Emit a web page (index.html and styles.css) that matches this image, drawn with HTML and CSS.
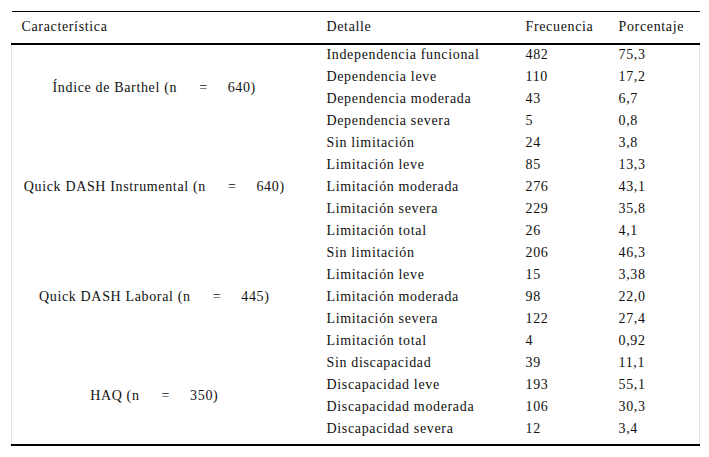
FILE: index.html
```html
<!DOCTYPE html>
<html lang="es">
<head>
<meta charset="utf-8">
<title>Tabla</title>
<link rel="stylesheet" href="styles.css">
</head>
<body>
<table class="data">
  <colgroup>
    <col class="c1"><col class="c2"><col class="c3"><col class="c4">
  </colgroup>
  <thead>
    <tr><th>Característica</th><th>Detalle</th><th>Frecuencia</th><th>Porcentaje</th></tr>
  </thead>
  <tbody>
    <tr><td class="group" rowspan="4">Índice de Barthel (n<span class="eq">=</span>640)</td><td>Independencia funcional</td><td>482</td><td>75,3</td></tr>
    <tr><td>Dependencia leve</td><td>110</td><td>17,2</td></tr>
    <tr><td>Dependencia moderada</td><td>43</td><td>6,7</td></tr>
    <tr><td>Dependencia severa</td><td>5</td><td>0,8</td></tr>
    <tr><td class="group" rowspan="5">Quick DASH Instrumental (n<span class="eq">=</span>640)</td><td>Sin limitación</td><td>24</td><td>3,8</td></tr>
    <tr><td>Limitación leve</td><td>85</td><td>13,3</td></tr>
    <tr><td>Limitación moderada</td><td>276</td><td>43,1</td></tr>
    <tr><td>Limitación severa</td><td>229</td><td>35,8</td></tr>
    <tr><td>Limitación total</td><td>26</td><td>4,1</td></tr>
    <tr><td class="group" rowspan="5">Quick DASH Laboral (n<span class="eq">=</span>445)</td><td>Sin limitación</td><td>206</td><td>46,3</td></tr>
    <tr><td>Limitación leve</td><td>15</td><td>3,38</td></tr>
    <tr><td>Limitación moderada</td><td>98</td><td>22,0</td></tr>
    <tr><td>Limitación severa</td><td>122</td><td>27,4</td></tr>
    <tr><td>Limitación total</td><td>4</td><td>0,92</td></tr>
    <tr><td class="group" rowspan="4">HAQ (n<span class="eq">=</span>350)</td><td>Sin discapacidad</td><td>39</td><td>11,1</td></tr>
    <tr><td>Discapacidad leve</td><td>193</td><td>55,1</td></tr>
    <tr><td>Discapacidad moderada</td><td>106</td><td>30,3</td></tr>
    <tr><td>Discapacidad severa</td><td>12</td><td>3,4</td></tr>
  </tbody>
  <tfoot>
    <tr><td class="spacer" colspan="4"></td></tr>
  </tfoot>
</table>
</body>
</html>
```

FILE: styles.css
```css
html, body {
  margin: 0;
  padding: 0;
  background: #fff;
}

body {
  padding: 11px 0 0 11px;
  font-family: "Liberation Serif", "Times New Roman", serif;
  font-size: 14px;
  letter-spacing: 0.65px;
  color: #111;
}

.data {
  border-collapse: collapse;
  table-layout: fixed;
  width: 688px;
}

.c1 { width: 305px; }
.c2 { width: 199px; }
.c3 { width: 93px; }
.c4 { width: 91px; }

.data th {
  font-weight: normal;
  text-align: left;
  height: 32px;
  padding: 0 10px;
  line-height: 16px;
  vertical-align: middle;
  border-top: 1px solid #000;
  border-bottom: 2px solid #000;
  box-sizing: border-box;
  white-space: nowrap;
}

.data td {
  height: 22px;
  padding: 0 10px;
  line-height: 16px;
  vertical-align: middle;
  white-space: nowrap;
  box-sizing: border-box;
}

.data td.group {
  text-align: center;
  padding: 0 30px 0 10px;
  border-left: 1px solid #e2e2e2;
}

.data tbody tr td:last-child {
  border-right: 1px solid #e2e2e2;
}

.eq {
  display: inline-block;
  margin: 0 20px 0 22px;
}

.data td.spacer {
  height: 5px;
  padding: 0;
  border-left: 1px solid #e2e2e2;
  border-right: 1px solid #e2e2e2;
  border-bottom: 2px solid #000;
}
```
